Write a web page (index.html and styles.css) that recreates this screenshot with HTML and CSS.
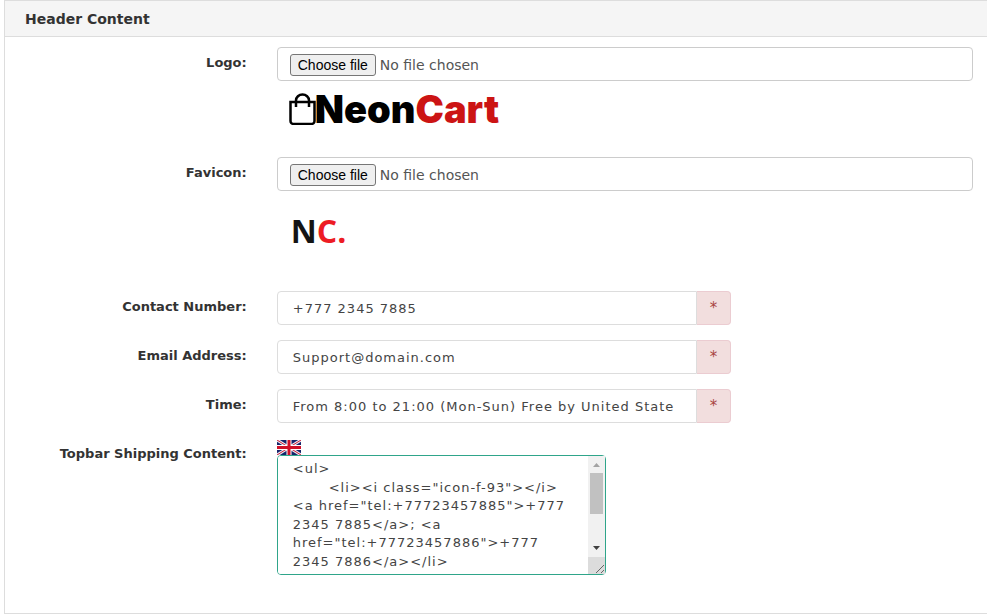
FILE: index.html
```html
<!DOCTYPE html>
<html lang="en">
<head>
<meta charset="utf-8">
<title>Header Content</title>
<link rel="stylesheet" href="styles.css">
</head>
<body>
<form class="panel">
  <h1 class="panel-heading">Header Content</h1>
  <div class="panel-body">
    <div class="row">
      <label class="label" for="logo">Logo:</label>
      <div class="field">
        <input class="file-input" type="file" id="logo">
        <label class="file-box" for="logo"><span class="file-button">Choose file</span><span>No file chosen</span></label>
        <div class="logo">
          <svg class="bag" viewBox="0 0 27 32" width="27" height="32" fill="none" stroke="#000" stroke-width="2.500">
            <path d="M1.500 9H25.500V28a3 3 0 0 1-3 3H4.500a3 3 0 0 1-3-3Z"/>
            <path d="M7 14V7.500a6.500 6 0 0 1 13 0V14"/>
          </svg><span class="logo-text">Neon<span class="logo-accent">Cart</span></span>
        </div>
      </div>
    </div>
    <div class="row">
      <label class="label" for="favicon">Favicon:</label>
      <div class="field">
        <input class="file-input" type="file" id="favicon">
        <label class="file-box" for="favicon"><span class="file-button">Choose file</span><span>No file chosen</span></label>
        <div class="favicon">N<span class="favicon-accent">C.</span></div>
      </div>
    </div>
    <div class="row">
      <label class="label" for="contact">Contact Number:</label>
      <div class="field">
        <div class="group"><input class="text" type="text" id="contact" value="+777 2345 7885"><span class="addon">*</span></div>
      </div>
    </div>
    <div class="row">
      <label class="label" for="email">Email Address:</label>
      <div class="field">
        <div class="group"><input class="text" type="text" id="email" value="Support@domain.com"><span class="addon">*</span></div>
      </div>
    </div>
    <div class="row">
      <label class="label" for="time">Time:</label>
      <div class="field">
        <div class="group"><input class="text" type="text" id="time" value="From 8:00 to 21:00 (Mon-Sun) Free by United State"><span class="addon">*</span></div>
      </div>
    </div>
    <div class="row">
      <label class="label" for="topbar">Topbar Shipping Content:</label>
      <div class="field">
        <svg class="flag" viewBox="0 0 24 15" width="24" height="15">
          <rect width="24" height="15" fill="#16246b"/>
          <path d="M0 0L24 15M24 0L0 15" stroke="#e9e9f2" stroke-width="3"/>
          <path d="M0 0L24 15M24 0L0 15" stroke="#d0203a" stroke-width="1"/>
          <path d="M12 0V15M0 7.500H24" stroke="#fff" stroke-width="5"/>
          <path d="M12 0V15M0 7.500H24" stroke="#cf1028" stroke-width="3"/>
        </svg>
        <div class="editor">
          <textarea class="textarea" id="topbar">&lt;ul&gt;
       &lt;li&gt;&lt;i class="icon-f-93"&gt;&lt;/i&gt; &lt;a href="tel:+77723457885"&gt;+777 2345 7885&lt;/a&gt;; &lt;a href="tel:+77723457886"&gt;+777 2345 7886&lt;/a&gt;&lt;/li&gt;

&lt;/ul&gt;</textarea>
          <svg class="scrollbar" viewBox="0 0 17 118" width="17" height="118">
            <rect width="17" height="118" fill="#f1f1f1"/>
            <path d="M5 11L8.500 7L12 11Z" fill="#a3a3a3"/>
            <rect x="2" y="17" width="13" height="41" fill="#c1c1c1"/>
            <path d="M5 90L8.500 94L12 90Z" fill="#404040"/>
            <rect y="101" width="17" height="17" fill="#dcdcdc"/>
            <path d="M8 117L16 109M13 117L16 114" stroke="#666"/>
          </svg>
        </div>
      </div>
    </div>
  </div>
</form>
</body>
</html>
```

FILE: styles.css
```css
* { box-sizing: border-box; }
body {
  margin: 0;
  background: #fff;
  color: #333;
  font: 13px/1.43 Verdana, "DejaVu Sans", sans-serif;
}
.panel {
  margin-left: 4px;
  border: 1px solid #ddd;
  border-right: 0;
}
.panel-heading {
  margin: 0;
  padding: 9px 20px 8px;
  border-bottom: 1px solid #ddd;
  background: #f5f5f5;
  font-size: 14px;
  line-height: 18px;
}
.panel-body {
  display: grid;
  gap: 15px;
  padding: 10px 0 38px 15px;
}
.row { display: grid; grid-template-columns: 1fr 3fr; }
.label {
  padding: 7px 15px 0;
  font-weight: bold;
  text-align: right;
}
.field { min-width: 0; padding: 0 14px 0 15px; }
.file-input {
  position: absolute;
  width: 1px;
  height: 1px;
  opacity: 0;
}
.file-box {
  display: flex;
  align-items: center;
  gap: 4px;
  height: 34px;
  padding: 2px 12px 0;
  border: 1px solid #ccc;
  border-radius: 4px;
  color: #555;
  font-size: 14px;
}
.file-button {
  padding: 0 7px;
  border: 1px solid #767676;
  border-radius: 3px;
  background: #efefef;
  color: #000;
  font: 14px/20px "Liberation Sans", Arial, sans-serif;
}
.logo {
  display: flex;
  align-items: center;
  height: 61px;
  padding: 0 0 5px 12px;
}
.bag { margin-right: -1px; }
.logo-text {
  color: #000;
  font: 900 38px/40px Inter, sans-serif;
}
.logo-accent { color: #cc1414; }
.favicon {
  height: 85px;
  padding: 20px 0 0 14px;
  color: #141414;
  font: bold 32px/40px "Open Sans", sans-serif;
}
.favicon-accent { color: #ed1c24; }
.group { display: flex; width: calc(66.67% - 10px); }
.text {
  flex: 1;
  min-width: 0;
  height: 34px;
  padding: 0 14px 0 15px;
  border: 1px solid #ddd;
  border-radius: 4px 0 0 4px;
  background: #fff;
  color: #444;
  font: inherit;
  letter-spacing: 1px;
}
.addon {
  width: 34px;
  border: 1px solid #ebccd1;
  border-left: 0;
  border-radius: 0 4px 4px 0;
  background: #f2dede;
  color: #a94442;
  font-size: 15px;
  line-height: 32px;
  text-align: center;
}
.flag { display: block; margin-top: 2px; }
.editor { position: relative; width: 329px; }
.textarea {
  display: block;
  width: 100%;
  height: 120px;
  padding: 4px 31px 0 15px;
  border: 1px solid #2fa58a;
  border-radius: 4px;
  outline: 0;
  background: #fff;
  color: #444;
  font: inherit;
  letter-spacing: 1px;
  resize: none;
  scrollbar-width: none;
}
.scrollbar { position: absolute; top: 1px; right: 1px; }
```
